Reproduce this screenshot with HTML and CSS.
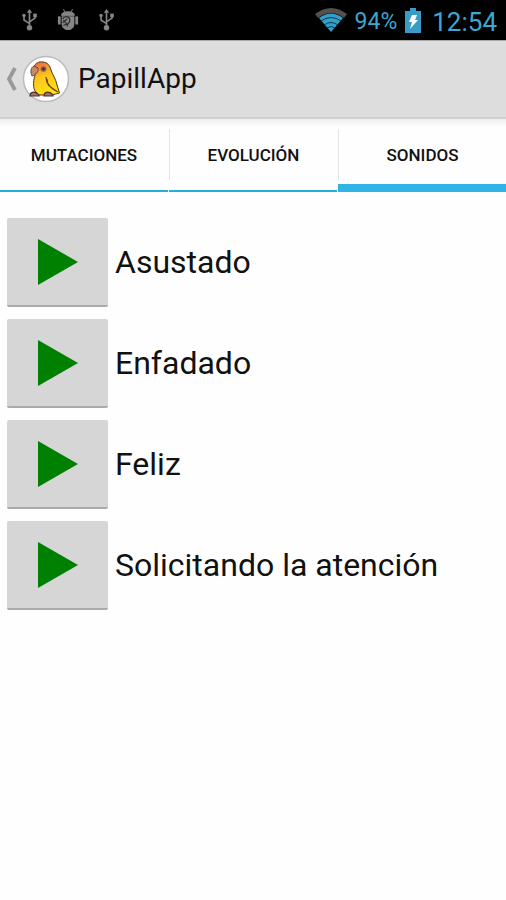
FILE: index.html
```html
<!DOCTYPE html>
<html lang="es">
<head>
<meta charset="utf-8">
<meta name="viewport" content="width=device-width, initial-scale=1">
<title>PapillApp</title>
<link rel="stylesheet" href="styles.css">
</head>
<body>
<svg class="defs" aria-hidden="true">
  <symbol id="usb" viewBox="0 0 16 24">
    <path d="M8 3v17M8 16L2 12V8M8 14l6-4V7" fill="none" stroke="currentColor" stroke-width="1.8"/>
    <path d="M8 0l3 4H5z"/><circle cx="8" cy="20.500" r="3"/><circle cx="2" cy="7" r="1.900"/><path d="M12 5h4v4h-4z"/>
  </symbol>
  <symbol id="play" viewBox="0 0 40 46"><path d="M0 0L40 23L0 46z"/></symbol>
</svg>
<div class="status">
  <div class="group notices">
    <svg class="usb"><use href="#usb"/></svg>
    <svg class="bug" viewBox="0 0 22 24">
      <path d="M4 7C4 4 7 3 11 3s7 1 7 4zM6 0l2 4M16 0l-2 4" stroke="currentColor"/>
      <path d="M4 8h14v8c0 4-3 7-7 7s-7-3-7-7z"/>
      <rect x="0" y="8" width="3" height="9" rx="1"/><rect x="19" y="8" width="3" height="9" rx="1"/>
      <path d="M5 11c2-4 8-3 8 1s-3 3-3 7M5 15l5-4M6 18l4-2M6 12l4 5" fill="none" stroke="#2a2a2a" stroke-width="1.3"/>
    </svg>
    <svg class="usb"><use href="#usb"/></svg>
  </div>
  <div class="group system">
    <svg class="wifi" viewBox="0 0 32 24">
      <path class="wifi-off" d="M0 6Q16-6 32 6l-3 4Q16 0 3 10z"/>
      <path d="M4 10Q16 1 28 10L16 24z"/>
      <path d="M6 13q10-7 20 0M9 17q7-5 14 0M12 20q4-3 8 0" fill="none" stroke="#0b394b" stroke-width="1"/>
    </svg>
    <span class="percent">94%</span>
    <svg class="battery" viewBox="0 0 16 25">
      <path d="M5 0h6v3h5v22H0V3h5z"/>
      <path d="M7 7h5l-2 5h3l-8 9 2-7H4z" fill="#fff"/>
    </svg>
    <time class="clock">12:54</time>
  </div>
</div>
<header class="appbar">
  <a class="home" href="#" aria-label="Volver">
    <svg class="back" viewBox="0 0 11 24"><path d="M9 1L3 12l6 11" fill="none" stroke="#999" stroke-width="3.8"/></svg>
    <svg class="logo" viewBox="0 0 48 48">
      <defs><linearGradient id="plumage" x1="0" y1="0" x2="0.3" y2="1">
        <stop offset="0" stop-color="#ee6630"/><stop offset=".22" stop-color="#f5893a"/><stop offset=".48" stop-color="#fbc41c"/><stop offset="1" stop-color="#ffe114"/>
      </linearGradient></defs>
      <circle cx="24" cy="24" r="22.5" fill="#fff" stroke="#bbb" stroke-width="1.5"/>
      <path d="M12 12C13 8 17 6.500 21 7c4.500 .5 7 3.500 8 8 1 4 5 9 6 15l2.500 8-4 1-3 1H17C10 36 11 27 13 20z" fill="url(#plumage)" stroke="#4d3410" stroke-width="1"/>
      <path d="M25 24c0 6 4 9 11 13M24 22c0 4 1 6 3 9" fill="none" stroke="#704011" stroke-width="1.200"/>
      <path d="M12 11c-3 1-4 6-2 10 4-1 7-5 6-8z" fill="#c48b67" stroke="#6f4329" stroke-width="1"/>
      <circle cx="21.500" cy="14" r="2.800" fill="#895c4a"/><circle cx="21.500" cy="14" r="1.200" fill="#382622"/>
      <path d="M8 41c0-5 6-5 9-1v1zM22 41c0-5 6-5 9-1v1z" fill="#a47468" stroke="#4a302b" stroke-width="1.200"/>
    </svg>
  </a>
  <h1 class="title">PapillApp</h1>
</header>
<nav class="tabs">
  <a class="tab" href="#"><span>MUTACIONES</span></a>
  <a class="tab" href="#"><span>EVOLUCIÓN</span></a>
  <a class="tab current" href="#" aria-current="page"><span>SONIDOS</span></a>
</nav>
<main>
  <ul class="sounds">
    <li><button class="play" id="s1" type="button" aria-label="Reproducir Asustado"><svg><use href="#play"/></svg></button><label for="s1">Asustado</label></li>
    <li><button class="play" id="s2" type="button" aria-label="Reproducir Enfadado"><svg><use href="#play"/></svg></button><label for="s2">Enfadado</label></li>
    <li><button class="play" id="s3" type="button" aria-label="Reproducir Feliz"><svg><use href="#play"/></svg></button><label for="s3">Feliz</label></li>
    <li><button class="play" id="s4" type="button" aria-label="Reproducir Solicitando la atención"><svg><use href="#play"/></svg></button><label for="s4">Solicitando la atención</label></li>
  </ul>
</main>
</body>
</html>
```
FILE: styles.css
```css
* { box-sizing: border-box; }
body {
  margin: 0;
  background: #fefefe;
  color: #111;
  font-family: Roboto, "Liberation Sans", sans-serif;
}
svg { display: block; fill: currentColor; }
.defs { position: absolute; width: 0; height: 0; }

.status {
  display: flex;
  justify-content: space-between;
  height: 40px;
  padding: 0 9px 0 22px;
  background: #000;
  color: #3ba7d3;
}
.group { display: flex; align-items: center; }
.notices { gap: 20px; color: #858585; }
.usb { width: 15px; height: 22px; }
.bug { width: 22px; height: 22px; }
.system { gap: 8px; }
.wifi { width: 32px; height: 24px; color: #329fc9; }
.wifi-off { fill: #554f4d; }
.percent { font-size: 23px; line-height: 40px; padding-top: 4px; }
.battery { width: 16px; height: 25px; color: #3a9cc6; }
.clock { padding: 4px 0 0 3px; font-size: 26px; line-height: 40px; }

.appbar {
  display: flex;
  align-items: center;
  gap: 8px;
  height: 79px;
  padding: 0 6px;
  background: #ddd;
  border-top: 1px solid #aaa;
  border-bottom: 2px solid #cfcfcf;
}
.home { display: flex; align-items: center; gap: 5px; }
.back { width: 11px; height: 24px; }
.logo { width: 48px; height: 48px; }
.title { margin: 0; font-size: 28px; font-weight: 400; line-height: 40px; }

.tabs {
  display: grid;
  grid-template-columns: repeat(3, 1fr);
  column-gap: 1px;
  height: 73px;
  background: linear-gradient(#eee, #fefefe 8px);
}
.tab {
  display: flex;
  padding: 10px 0;
  border-bottom: 2px solid #24aede;
  color: #111;
  font-size: 17px;
  font-weight: 500;
  line-height: 20px;
  text-align: center;
  text-decoration: none;
}
.tab span { flex: 1; padding-top: 16px; border-left: 1px solid #e4e4e4; }
.tab.current { padding-bottom: 4px; border-bottom: 8px solid #2fb4e5; }
.tab:first-child span { border-left: 0; }

.sounds {
  display: grid;
  gap: 12px;
  margin: 0;
  padding: 26px 7px;
  list-style: none;
}
.sounds li { display: flex; align-items: center; gap: 7px; }
.sounds label { font-size: 32px; line-height: 38px; padding-bottom: 2px; }
.play {
  display: grid;
  place-items: center;
  width: 101px;
  height: 89px;
  padding: 0;
  border: 0;
  border-bottom: 2px solid #aaa;
  border-radius: 2px;
  background: #d6d6d6;
  color: #008000;
}
.play svg { width: 40px; height: 46px; }
```
